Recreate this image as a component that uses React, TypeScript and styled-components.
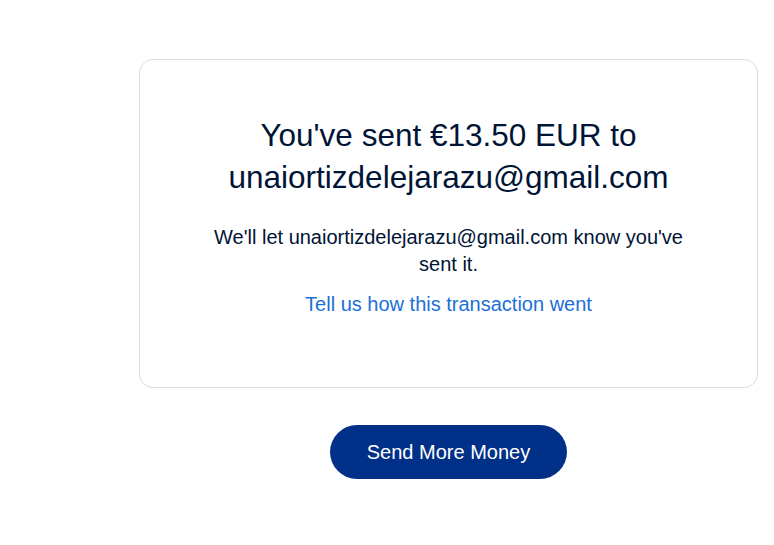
import React from 'react';
import styled, { createGlobalStyle } from 'styled-components';

const GlobalStyle = createGlobalStyle`
  html, body {
    margin: 0;
    padding: 0;
    background: #ffffff;
  }
  body {
    font-family: "Liberation Sans", Arial, sans-serif;
    color: #001435;
  }
`;

const Page = styled.main`
  display: flex;
  flex-direction: column;
  align-items: center;
  width: 619px;
  padding: 59px 0 0 139px;
`;

const Card = styled.section`
  box-sizing: border-box;
  width: 100%;
  height: 329px;
  border: 1px solid #dcdcdc;
  border-radius: 14px;
  padding: 54px 40px 0;
  display: flex;
  flex-direction: column;
  align-items: center;
  text-align: center;
`;

const Title = styled.h1`
  margin: 0;
  font-size: 31.5px;
  font-weight: 400;
  line-height: 42px;
  color: #001435;
`;

const Message = styled.p`
  margin: 26px 0 0;
  max-width: 490px;
  font-size: 20px;
  line-height: 27px;
  color: #001435;
`;

const FeedbackLink = styled.a`
  margin-top: 13px;
  font-size: 20px;
  line-height: 27px;
  color: #1a6fd8;
  text-decoration: none;
  cursor: pointer;
`;

const PrimaryButton = styled.button`
  margin-top: 37px;
  width: 237px;
  height: 54px;
  border: none;
  border-radius: 27px;
  background: #003087;
  color: #ffffff;
  font-family: "Liberation Sans", Arial, sans-serif;
  font-size: 20px;
  cursor: pointer;
`;

export default function App() {
  const recipient = 'unaiortizdelejarazu@gmail.com';
  return (
    <>
      <GlobalStyle />
      <Page>
        <Card>
          <Title>
            You've sent €13.50 EUR to
            <br />
            {recipient}
          </Title>
          <Message>We'll let {recipient} know you've sent it.</Message>
          <FeedbackLink>Tell us how this transaction went</FeedbackLink>
        </Card>
        <PrimaryButton>Send More Money</PrimaryButton>
      </Page>
    </>
  );
}
